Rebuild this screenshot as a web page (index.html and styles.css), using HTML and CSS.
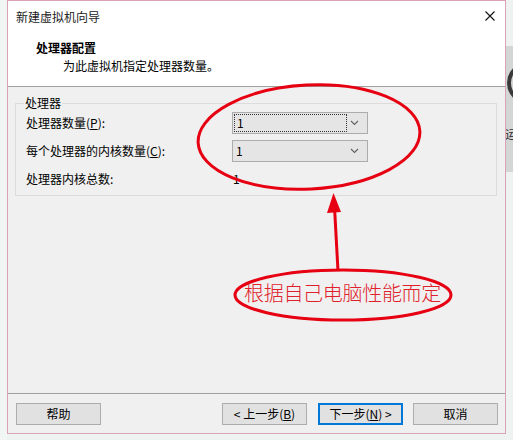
FILE: index.html
```html
<!DOCTYPE html>
<html lang="zh">
<head>
<meta charset="utf-8">
<title>新建虚拟机向导</title>
<link rel="stylesheet" href="styles.css">
</head>
<body>
<div class="page">
  <div class="edge-left"></div>
  <div class="dialog">
    <div class="titlebar">
      <span class="title">新建虚拟机向导</span>
      <svg class="close" width="10" height="10" viewBox="0 0 10 10"><path d="M0.5 0.5L9.5 9.5M9.5 0.5L0.5 9.5" stroke="#111" stroke-width="1.1" fill="none"/></svg>
    </div>
    <div class="header">
      <div class="h-title">处理器配置</div>
      <div class="h-desc">为此虚拟机指定处理器数量。</div>
    </div>
    <div class="body">
      <fieldset class="group">
        <legend>处理器</legend>
        <div class="rows">
          <div class="lbl">处理器数量(<u>P</u>):</div>
          <div class="combo focus"><span class="val">1</span><svg class="chev" width="9" height="6" viewBox="0 0 9 6"><path d="M1 1L4.5 4.5L8 1" stroke="#606060" stroke-width="1.1" fill="none"/></svg></div>
          <div class="lbl">每个处理器的内核数量(<u>C</u>):</div>
          <div class="combo"><span class="val">1</span><svg class="chev" width="9" height="6" viewBox="0 0 9 6"><path d="M1 1L4.5 4.5L8 1" stroke="#606060" stroke-width="1.1" fill="none"/></svg></div>
          <div class="lbl">处理器内核总数:</div>
          <div class="plain">1</div>
        </div>
      </fieldset>
    </div>
    <div class="footer">
      <button class="btn">帮助</button>
      <div class="spacer"></div>
      <button class="btn">&lt; 上一步(<u>B</u>)</button>
      <button class="btn default">下一步(<u>N</u>) &gt;</button>
      <button class="btn">取消</button>
    </div>
  </div>
  <div class="edge-right">
    <div class="bg-panel">
      <div class="bg-ring"></div>
      <div class="bg-char">运</div>
    </div>
  </div>

  <svg class="annot" width="513" height="440" viewBox="0 0 513 440">
    <ellipse cx="309" cy="137" rx="111" ry="52" fill="none" stroke="#e60012" stroke-width="3" transform="rotate(-3 309 137)"/>
    <ellipse cx="343" cy="295" rx="108" ry="25" fill="none" stroke="#e60012" stroke-width="3"/>
    <path d="M338 271L334.5 207" stroke="#e60012" stroke-width="3" fill="none"/>
    <polygon points="333.5,193 327,213 341,212" fill="#e60012"/>
  </svg>
  <div class="note">根据自己电脑性能而定</div>
</div>
</body>
</html>
```
FILE: styles.css
```css
html, body {
  margin: 0;
  padding: 0;
}
body {
  width: 513px;
  height: 440px;
  overflow: hidden;
  background: #eef3f1;
  font-family: "Noto Sans CJK SC", "Microsoft YaHei", sans-serif;
  font-size: 12px;
  color: #000;
}
.page {
  position: relative;
  width: 513px;
  height: 440px;
  display: flex;
  align-items: flex-start;
}
.edge-left {
  width: 7px;
  height: 440px;
  background: #f1f5f3;
}
.dialog {
  width: 497px;
  height: 432px;
  border: 1px solid #d9a3b5;
  background: #f0f0f0;
  display: flex;
  flex-direction: column;
}
.titlebar {
  height: 30px;
  background: #fff;
  display: flex;
  align-items: center;
  padding: 0 10px 0 8px;
}
.title {
  flex: 1;
  line-height: 16px;
  color: #222;
  margin-top: 1px;
}
.close {
  display: block;
  margin-right: 0;
}
.header {
  background: #fff;
  height: 56px;
  border-bottom: 1px solid #a0a0a0;
  padding-left: 28px;
  box-sizing: border-box;
  padding-top: 8px;
}
.h-title {
  font-weight: bold;
  line-height: 17px;
}
.h-desc {
  padding-left: 27px;
  line-height: 17px;
  margin-top: 1px;
}
.body {
  flex: 1;
  padding: 9px 8px 0 7px;
}
.group {
  margin: 0;
  border: 1px solid #dcdcdc;
  padding: 2px 10px 5px 10px;
  min-width: 0;
}
.group legend {
  padding: 0 1px;
  margin-left: -2px;
  line-height: 14px;
}
.rows {
  display: grid;
  grid-template-columns: 206px 136px;
  grid-auto-rows: 22px;
  row-gap: 6px;
  align-items: center;
}
.lbl {
  line-height: 16px;
}
.combo {
  height: 22px;
  box-sizing: border-box;
  border: 1px solid #acacac;
  background: #e5e5e5;
  display: flex;
  align-items: center;
  justify-content: space-between;
  padding: 0 8px 0 3px;
  position: relative;
}
.combo .val {
  line-height: 16px;
}
.combo.focus::before {
  content: "";
  position: absolute;
  left: 1px;
  top: 1px;
  bottom: 1px;
  width: 113px;
  border: 1px dotted #333;
  box-sizing: border-box;
}
.combo.focus .val {
  padding-left: 1px;
}
.plain {
  padding-left: 1px;
  line-height: 16px;
}
.footer {
  height: 40px;
  box-sizing: border-box;
  border-top: 1px solid #a0a0a0;
  display: flex;
  align-items: center;
  padding: 0 7px 0 8px;
}
.spacer {
  flex: 1;
}
.btn {
  width: 85px;
  height: 22px;
  box-sizing: border-box;
  border: 1px solid #adadad;
  background: #e1e1e1;
  font-family: inherit;
  font-size: 12px;
  color: #000;
  padding: 0;
  line-height: 16px;
  margin: 0;
}
.btn.default {
  border-color: #0078d7;
  box-shadow: inset 0 0 0 1px #0078d7;
  margin-left: 11px;
  margin-right: 10px;
}
.edge-right {
  width: 7px;
  height: 440px;
  overflow: hidden;
  position: relative;
  background: #eef3f1;
}
.bg-panel {
  margin-top: 46px;
  width: 40px;
  height: 126px;
  background: #d4d6d6;
  position: relative;
}
.bg-ring {
  position: absolute;
  left: 1px;
  top: 16px;
  width: 34px;
  height: 34px;
  border: 4px solid #3a3a3a;
  border-radius: 50%;
}
.bg-char {
  position: absolute;
  left: -1px;
  top: 80px;
  font-size: 12px;
  line-height: 16px;
  color: #333;
}
.annot {
  position: absolute;
  left: 0;
  top: 0;
  pointer-events: none;
}
.note {
  position: absolute;
  left: 244px;
  top: 281px;
  font-size: 20px;
  line-height: 24px;
  letter-spacing: -0.3px;
  color: #e0202a;
  font-weight: 300;
  white-space: nowrap;
}
```
